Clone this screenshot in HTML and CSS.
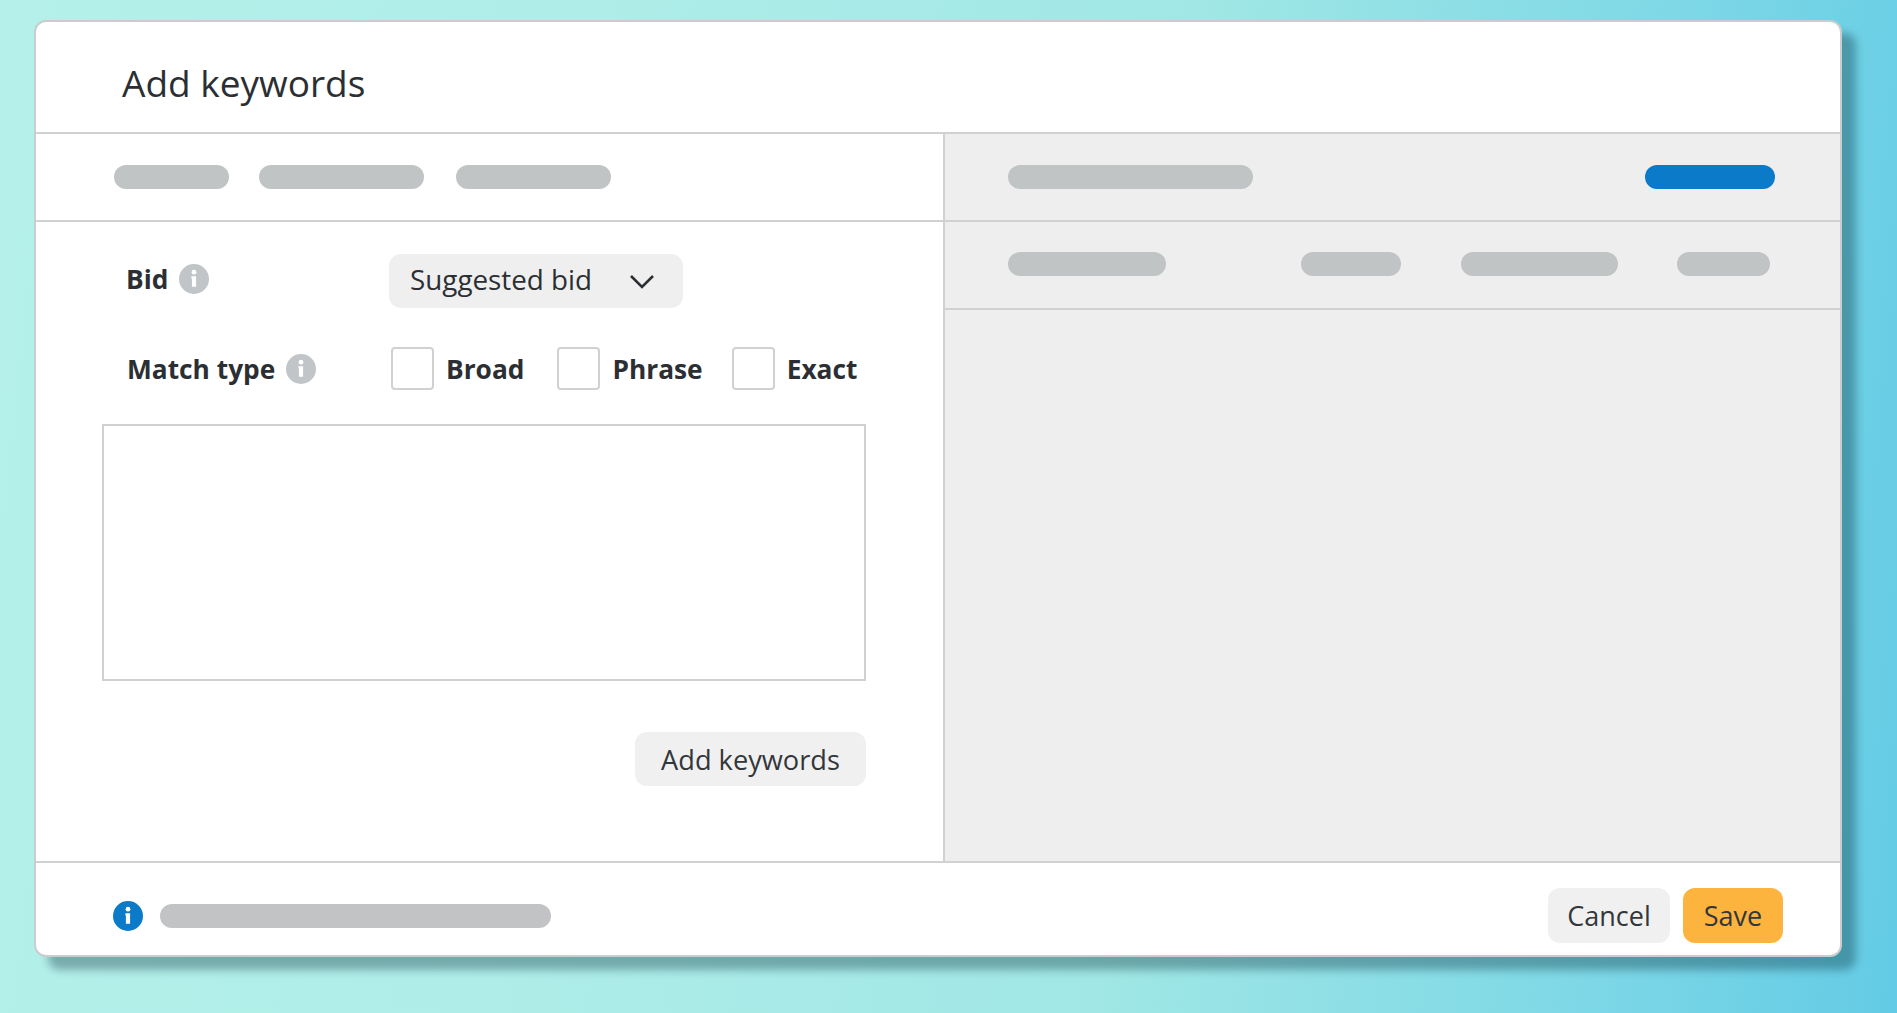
FILE: index.html
```html
<!DOCTYPE html>
<html lang="en">
<head>
<meta charset="utf-8">
<title>Add keywords</title>
<link rel="stylesheet" href="styles.css">
</head>
<body>
<main class="modal">
  <header class="modal-head"><h1>Add keywords</h1></header>
  <div class="modal-body">
    <section class="col-left">
      <div class="bar">
        <span class="pill w115"></span><span class="pill w165"></span><span class="pill w155"></span>
      </div>
      <div class="form">
        <div class="row row-bid">
          <div class="label">Bid
            <svg class="info" viewBox="0 0 30 30"><circle cx="15" cy="15" r="15" fill="#c1c5c7"/><circle cx="15" cy="8.2" r="2.4" fill="#fff"/><path d="M12.4 12.2h4.7v10.6h-4.2v-8.4h-.5z" fill="#fff"/></svg>
          </div>
          <div class="select"><span class="select-text">Suggested bid</span>
            <svg class="chev" viewBox="0 0 26 15"><path d="M2 2l11 11L24 2" fill="none" stroke="#2b2f33" stroke-width="2.6"/></svg>
          </div>
        </div>
        <div class="row row-match">
          <div class="label">Match type
            <svg class="info" viewBox="0 0 30 30"><circle cx="15" cy="15" r="15" fill="#c1c5c7"/><circle cx="15" cy="8.2" r="2.4" fill="#fff"/><path d="M12.4 12.2h4.7v10.6h-4.2v-8.4h-.5z" fill="#fff"/></svg>
          </div>
          <div class="checks">
            <label class="check c1"><span class="box"></span>Broad</label>
            <label class="check c2"><span class="box"></span>Phrase</label>
            <label class="check"><span class="box"></span>Exact</label>
          </div>
        </div>
        <div class="textarea"></div>
        <div class="form-actions"><button class="btn btn-add">Add keywords</button></div>
      </div>
    </section>
    <section class="col-right">
      <div class="bar bar-right">
        <span class="pill w245"></span><span class="pill w130 blue"></span>
      </div>
      <div class="bar bar-cols">
        <span class="pill w158 first"></span><span class="pill w100"></span><span class="pill w157"></span><span class="pill w93"></span>
      </div>
    </section>
  </div>
  <footer class="modal-foot">
    <svg class="info" viewBox="0 0 30 30"><circle cx="15" cy="15" r="15" fill="#0a7ac9"/><circle cx="15" cy="8.2" r="2.4" fill="#fff"/><path d="M12.4 12.2h4.7v10.6h-4.2v-8.4h-.5z" fill="#fff"/></svg>
    <span class="pill w391"></span>
    <div class="foot-actions">
      <button class="btn btn-cancel">Cancel</button>
      <button class="btn btn-save">Save</button>
    </div>
  </footer>
</main>
</body>
</html>
```

FILE: styles.css
```css
* { box-sizing: border-box; }
html, body { margin: 0; height: 100%; }
body {
  padding: 20px 55px 56px 34px;
  background: linear-gradient(96deg, #b5f0ea 0%, #aeede8 30%, #a0e7e5 60%, #7cd7e6 85%, #63cbe5 100%);
  font-family: "Open Sans", "Noto Sans", sans-serif;
  color: #2b2f33;
  overflow: hidden;
}
.modal {
  height: 937px;
  display: flex;
  flex-direction: column;
  background: #fff;
  border: 2px solid #c9cdce;
  border-radius: 12px;
  box-shadow: 14px 13px 8px rgba(0, 35, 50, 0.33);
  overflow: hidden;
}
.modal-head {
  height: 112px;
  flex: none;
  display: flex;
  align-items: center;
  padding: 11px 0 0 86px;
  border-bottom: 2px solid #cfd1d2;
}
h1 { margin: 0; font-size: 37px; font-weight: 500; line-height: 48px; }
.modal-body { flex: 1; display: flex; min-height: 0; }
.col-left { width: 909px; flex: none; border-right: 2px solid #cfd1d2; }
.col-right { flex: 1; background: #eeeeef; }
.bar {
  height: 88px;
  display: flex;
  align-items: center;
  gap: 30px;
  padding-left: 78px;
  border-bottom: 2px solid #cfd1d2;
}
.bar-right { justify-content: space-between; padding: 0 65px 0 63px; }
.bar-cols { gap: 59.5px; padding: 0 70px 3px 63px; }
.bar-cols .first { margin-right: auto; }
.pill { display: block; height: 24px; border-radius: 12px; background: #c1c4c5; flex: none; }
.blue { background: #0a7ac9; }
.w93 { width: 93px; } .w100 { width: 100px; } .w115 { width: 115px; }
.w130 { width: 130px; } .w155 { width: 155px; margin-left: 2px; } .w157 { width: 157px; }
.w158 { width: 158px; } .w165 { width: 165px; } .w245 { width: 245px; } .w391 { width: 391px; }
.form { padding: 32px 0 0 66px; }
.row { display: flex; align-items: center; }
.row-match { margin-top: 39px; }
.label {
  width: 287px;
  flex: none;
  display: flex;
  align-items: center;
  gap: 11px;
  padding-left: 24px;
  font-size: 26.3px;
  font-weight: 700;
}
.row-bid .label { padding-bottom: 4px; }
.row-match .label { padding-left: 25px; }
.info { width: 30px; height: 30px; flex: none; display: block; }
.select {
  width: 294px;
  height: 54px;
  display: flex;
  align-items: center;
  justify-content: space-between;
  padding: 0 28px 0 21px;
  background: #efefef;
  border-radius: 12px;
  font-size: 27.8px;
}
.select-text { padding-bottom: 4px; }
.chev { width: 26px; height: 15px; display: block; }
.checks { display: flex; padding-left: 2px; font-size: 26.3px; font-weight: 700; }
.check { display: flex; align-items: center; gap: 12px; }
.c1 { margin-right: 33px; }
.c2 { margin-right: 29px; }
.box { width: 43px; height: 43px; border: 2px solid #cfd1d2; border-radius: 4px; background: #fff; display: block; }
.textarea { width: 764px; height: 257px; margin-top: 34px; border: 2px solid #cfd1d2; background: #fff; }
.form-actions { width: 764px; margin-top: 51px; display: flex; justify-content: flex-end; }
.btn {
  height: 55px;
  border: 0;
  border-radius: 12px;
  padding: 0;
  font: 400 27px "Open Sans", "Noto Sans", sans-serif;
  color: #33373a;
  background: #f0f0f0;
}
.btn-add { width: 231px; height: 54px; font-size: 27.2px; }
.modal-foot {
  height: 94px;
  flex: none;
  display: flex;
  align-items: center;
  gap: 17px;
  padding: 13px 57px 0 77px;
  border-top: 2px solid #cfd1d2;
}
.modal-foot .pill { background: #c2c3c5; }
.foot-actions { margin-left: auto; display: flex; gap: 13px; }
.btn-cancel { width: 122px; }
.btn-save { width: 100px; background: #fdb43f; }
```
